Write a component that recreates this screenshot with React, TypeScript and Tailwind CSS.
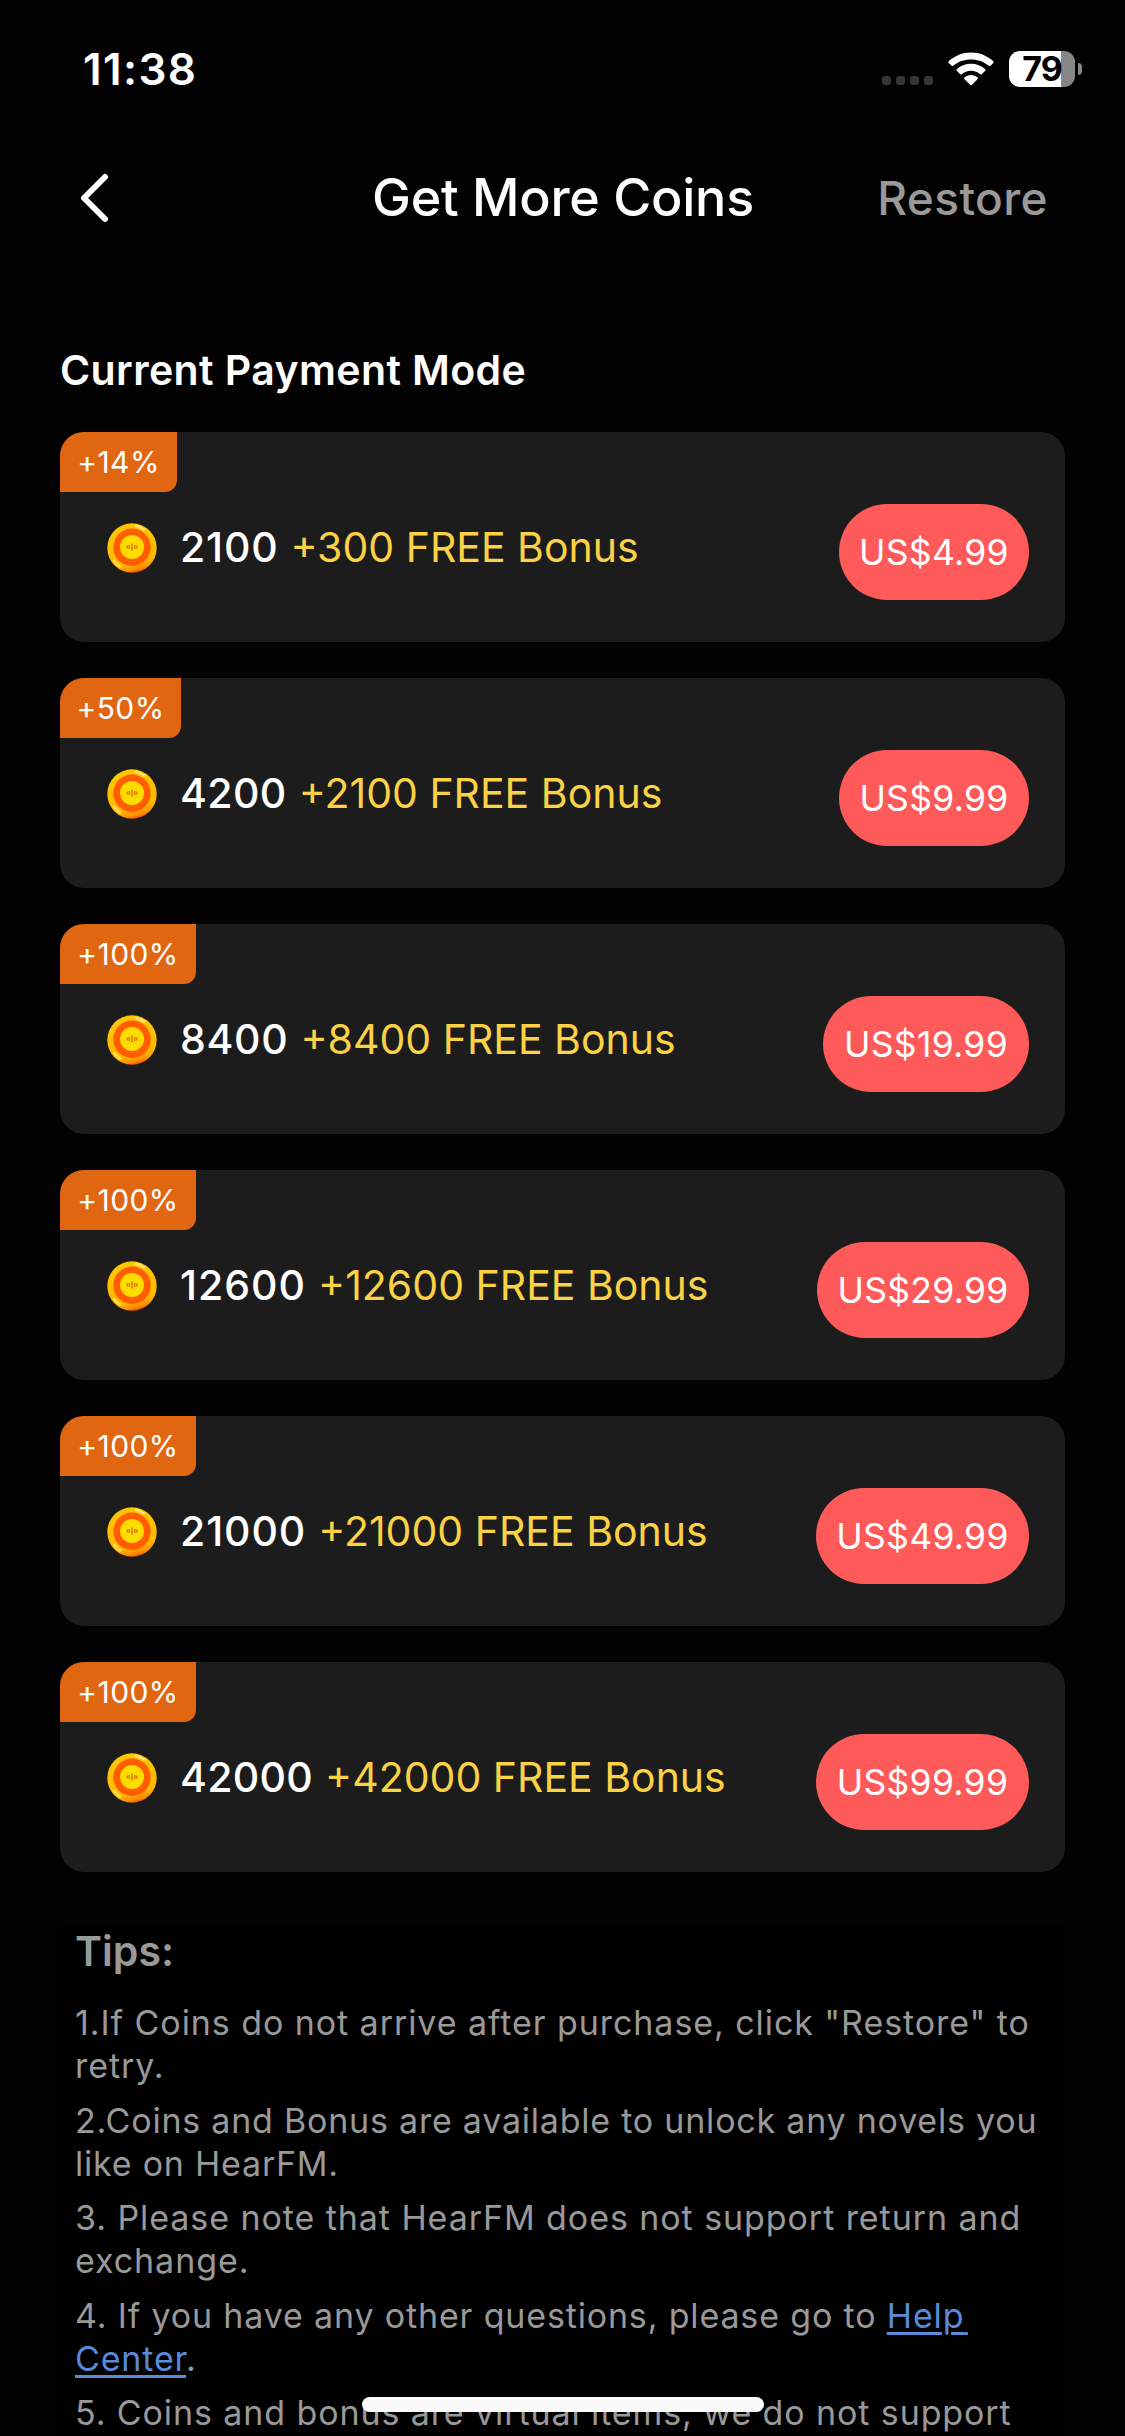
import type { ReactNode } from "react";

const packs = [
  { tag: "+14%", tagWidth: "w-[117px]", coins: "2100", tracking: "tracking-[0.8px]", bonus: "+300 FREE Bonus", price: "US$4.99", priceWidth: "w-[190px]" },
  { tag: "+50%", tagWidth: "w-[121px]", coins: "4200", tracking: "tracking-[0.4px]", bonus: "+2100 FREE Bonus", price: "US$9.99", priceWidth: "w-[190px]" },
  { tag: "+100%", tagWidth: "w-[136px]", coins: "8400", tracking: "tracking-[0.7px]", bonus: "+8400 FREE Bonus", price: "US$19.99", priceWidth: "w-[206px]" },
  { tag: "+100%", tagWidth: "w-[136px]", coins: "12600", tracking: "tracking-[1px]", bonus: "+12600 FREE Bonus", price: "US$29.99", priceWidth: "w-[212px]" },
  { tag: "+100%", tagWidth: "w-[136px]", coins: "21000", tracking: "tracking-[0.9px]", bonus: "+21000 FREE Bonus", price: "US$49.99", priceWidth: "w-[213px]" },
  { tag: "+100%", tagWidth: "w-[136px]", coins: "42000", tracking: "tracking-[0.3px]", bonus: "+42000 FREE Bonus", price: "US$99.99", priceWidth: "w-[213px]" },
];

const tips: { tracking: string; body: ReactNode }[] = [
  {
    tracking: "tracking-[0.93px]",
    body: <>1.If Coins do not arrive after purchase, click "Restore" to<br />retry.</>,
  },
  {
    tracking: "tracking-[0.78px]",
    body: <>2.Coins and Bonus are available to unlock any novels you<br />like on HearFM.</>,
  },
  {
    tracking: "tracking-[0.93px]",
    body: <>3. Please note that HearFM does not support return and<br />exchange.</>,
  },
  {
    tracking: "tracking-[0.84px]",
    body: (
      <>
        4. If you have any other questions, please go to{" "}
        <a className="text-[#5a8ad8] underline decoration-[3px] underline-offset-[4px]">
          Help<span className="tracking-[-6px]">&nbsp;</span><br />Center
        </a>.
      </>
    ),
  },
  {
    tracking: "tracking-[0.9px]",
    body: <>5. Coins and bonus are virtual items, we do not support</>,
  },
];

function StatusBar() {
  return (
    <div className="flex h-[138px] shrink-0 items-center pl-[83px] pr-[43px]">
      <span className="text-[44px] font-semibold leading-[54px] tracking-[1.4px]">11:38</span>
      <div className="ml-auto flex items-center">
        <div className="mr-[15px] mt-[23px] flex gap-[5px]">
          <i className="h-[9px] w-[9px] rounded-[3px] bg-[#353535]" />
          <i className="h-[9px] w-[9px] rounded-[3px] bg-[#353535]" />
          <i className="h-[9px] w-[9px] rounded-[3px] bg-[#353535]" />
          <i className="h-[9px] w-[9px] rounded-[3px] bg-[#353535]" />
        </div>
        <svg className="mr-[15px] h-[34px] w-[46px]" viewBox="0 0 46 34" fill="white">
          <path d="M23 0.5C14.4 0.5 6.5 3.900 0.700 9.300Q-0.100 10.100 0.700 10.900L3.600 13.800Q4.400 14.500 5.200 13.800C9.900 9.600 16.100 7.400 23 7.400S36.100 9.600 40.800 13.800Q41.600 14.500 42.400 13.800L45.300 10.900Q46.100 10.100 45.300 9.300C39.500 3.900 31.600 0.500 23 0.500Z" />
          <path d="M23 11.800C17.500 11.800 12.600 13.800 8.800 17.200Q8 18 8.800 18.800L12.200 22.200Q13 22.900 13.800 22.200C16.200 20 19.400 18.700 23 18.700S29.800 20 32.200 22.200Q33 22.900 33.800 22.200L37.200 18.800Q38 18 37.200 17.200C33.400 13.800 28.500 11.800 23 11.800Z" />
          <path d="M23 23.100C20.400 23.100 18.100 24 16.400 25.600Q15.700 26.300 16.400 27L22.200 32.900Q23 33.700 23.800 32.900L29.600 27Q30.300 26.300 29.600 25.600C27.900 24 25.600 23.100 23 23.100Z" />
        </svg>
        <div className="flex h-9 w-[66px] items-center justify-center rounded-[11px] bg-linear-to-r from-white from-79% to-[#868686] to-79%">
          <span className="text-[34px] font-bold leading-9 tracking-[-1px] text-black">79</span>
        </div>
        <i className="ml-[3px] h-3 w-1 rounded-r-full bg-[#868686]" />
      </div>
    </div>
  );
}

function CoinIcon() {
  return (
    <svg className="h-[50px] w-[50px]" viewBox="0 0 50 50">
      <defs>
        <linearGradient id="rim" x1="0.35" y1="0" x2="0.6" y2="1">
          <stop offset="0" stopColor="#ffc800" />
          <stop offset="0.8" stopColor="#ffb800" />
          <stop offset="0.93" stopColor="#ff8a00" />
          <stop offset="1" stopColor="#e84a00" />
        </linearGradient>
      </defs>
      <circle cx="25" cy="25" r="24.700" fill="url(#rim)" />
      <path d="M28 2.800A22.500 22.500 0 0 1 38 7" fill="none" stroke="#ffe070" strokeWidth="2.500" />
      <path d="M6.500 37A22 22 0 0 0 14 44" fill="none" stroke="#ffda50" strokeWidth="3" />
      <circle cx="25" cy="24.300" r="18.700" fill="#ff5d00" />
      <circle cx="25" cy="24" r="12" fill="#ffdc00" />
      <path d="M20.200 22.500v3M22.200 22v4M25 20.500v7M27.800 22v4M29.800 22.500v3" stroke="#d96c00" strokeWidth="1.300" />
    </svg>
  );
}

export default function App() {
  return (
    <div className="relative flex h-[2436px] w-[1125px] flex-col overflow-hidden bg-[#020202] font-['Inter',sans-serif] text-white">
      <StatusBar />

      <header className="grid h-[120px] shrink-0 grid-cols-[1fr_auto_1fr] items-center pl-[78px] pr-[77px]">
        <svg className="h-[54px] w-[33px]" viewBox="0 0 33 54" fill="none" stroke="white" strokeWidth="6" strokeLinecap="round" strokeLinejoin="round">
          <path d="M27 6L6 27L27 48" />
        </svg>
        <h1 className="text-[52px] font-medium leading-[64px] tracking-[-0.25px]">Get More Coins</h1>
        <span className="justify-self-end text-[46px] font-medium leading-[56px] tracking-[0.4px] text-[#999]">Restore</span>
      </header>

      <main className="flex flex-col px-[60px]">
        <h2 className="mt-[91px] text-[41px] font-semibold leading-[42px] tracking-[0.4px]">Current Payment Mode</h2>

        <div className="mt-[41px] flex flex-col gap-9">
          {packs.map((p) => (
            <div key={p.price} className="h-[210px] overflow-hidden rounded-3xl bg-[#1c1c1c]">
              <div className={`flex h-[60px] items-center justify-center rounded-br-xl bg-[#e16612] text-[30px] leading-none tracking-[0.4px] ${p.tagWidth}`}>
                {p.tag}
              </div>
              <div className="flex items-start pl-[47px] pr-9 pt-3">
                <div className="mt-[19px]">
                  <CoinIcon />
                </div>
                <div className="ml-[23px] mt-[19px] flex gap-3 whitespace-nowrap text-[41px] leading-[49px]">
                  <span className={`font-medium ${p.tracking}`}>{p.coins}</span>
                  <span className="text-[#fbd145]">{p.bonus}</span>
                </div>
                <div className={`ml-auto flex h-24 items-center justify-center rounded-full bg-[#ff5a5a] pt-px text-[35.5px] leading-[43px] tracking-[0.3px] ${p.priceWidth}`}>
                  {p.price}
                </div>
              </div>
            </div>
          ))}
        </div>

        <section className="mt-[54px] h-[510px] bg-black pl-[15px] text-[#999]">
          <h3 className="text-[41px] font-semibold leading-[50px]">Tips:</h3>
          <div className="mt-[25px] flex flex-col gap-[11.6px] whitespace-nowrap text-[34px] leading-[43px]">
            {tips.map((tip, i) => (
              <p key={i} className={tip.tracking}>{tip.body}</p>
            ))}
          </div>
        </section>
      </main>

      {/* home indicator */}
      <div className="absolute bottom-6 left-[362px] h-[15px] w-[402px] rounded-full bg-[#fafafa]" />
    </div>
  );
}
